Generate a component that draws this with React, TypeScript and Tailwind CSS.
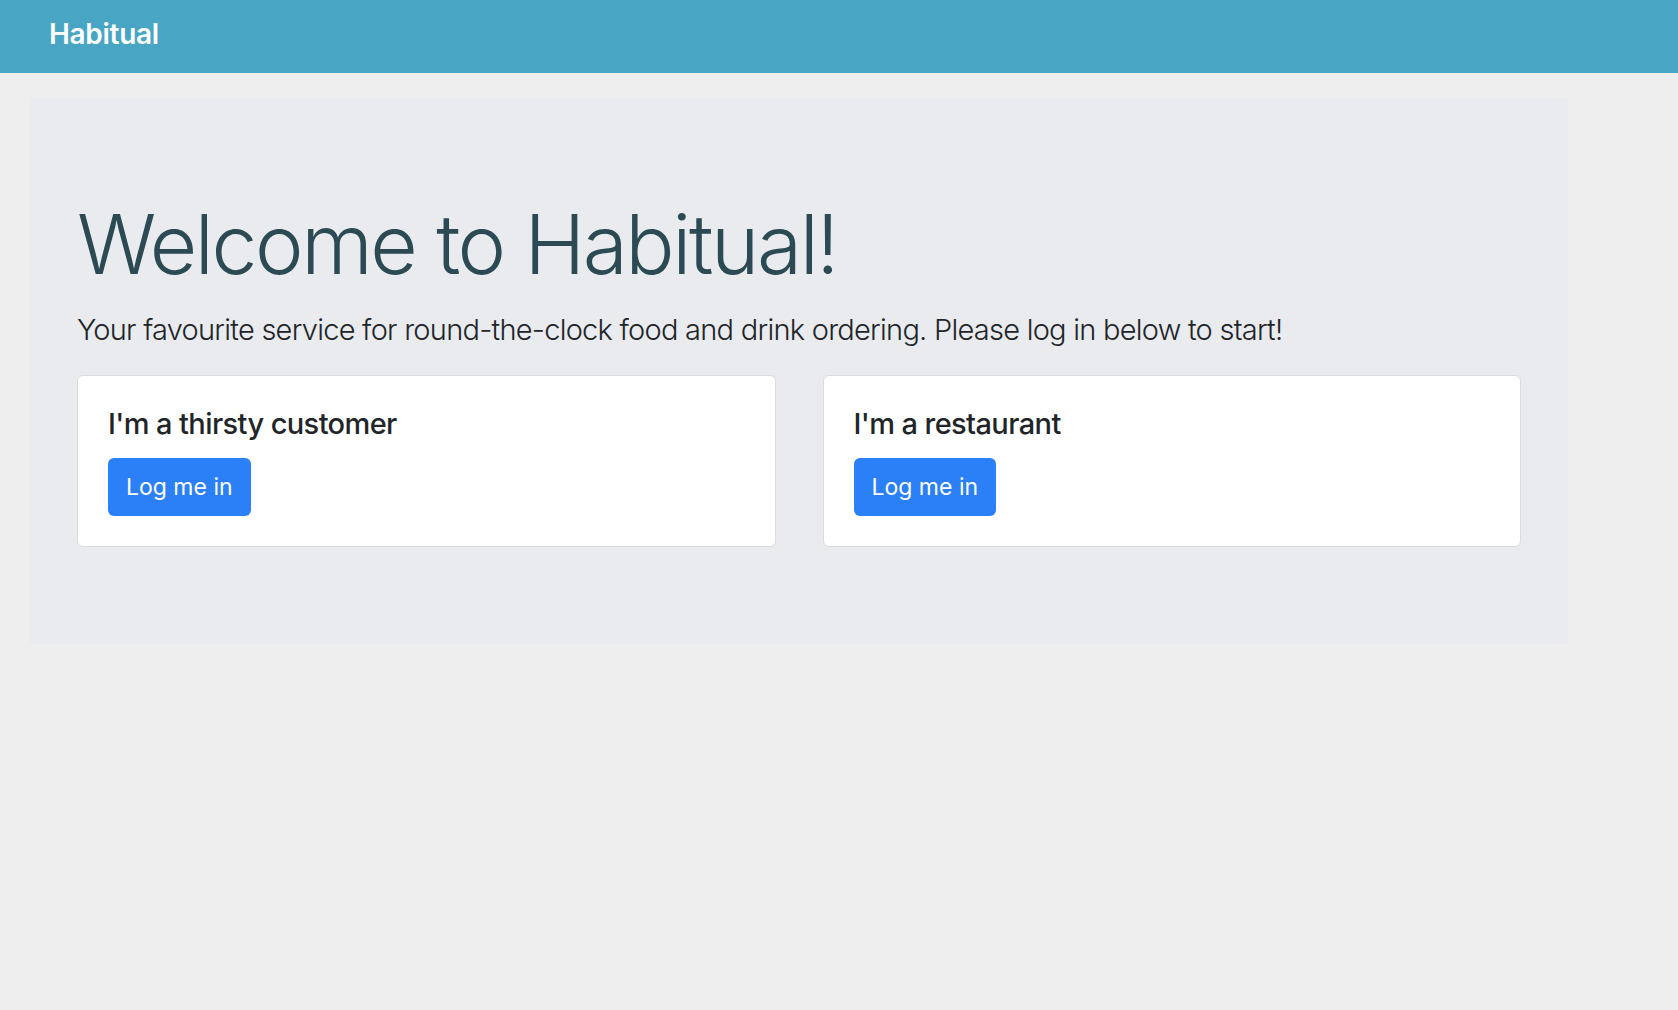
import React from 'react';

const roles = [
  { title: "I'm a thirsty customer" },
  { title: "I'm a restaurant" },
];

const RoleCard: React.FC<{ title: string }> = ({ title }) => (
  <div className="flex-1 bg-white border-[1.5px] border-[#dcdcdc] rounded-[6px] p-[30px]">
    <h5 className="text-[29px] leading-[36px] font-medium text-[#212529] tracking-[-0.6px] mb-[16px]">{title}</h5>
    <button className="h-[58px] px-[18px] rounded-[6px] bg-[#2b7ff7] text-white text-[23px] leading-[36px]">
      Log me in
    </button>
  </div>
);

export default function App() {
  return (
    <div className="min-h-screen bg-[#eeeeee] font-['Inter',sans-serif]">
      <header className="h-[73px] bg-[#48a5c3] flex items-center pl-[49px] pb-[6px]">
        <span className="text-white text-[28px] font-semibold tracking-[-0.3px]">Habitual</span>
      </header>

      <main className="ml-[30px] mt-[25px] w-[1538px] bg-[#e9ebee] rounded-[3px] px-[47px] pt-[96px] pb-[97px]">
        <h1 className="text-[82px] leading-[101px] font-light text-[#2c4a53] tracking-[-2.4px] mb-[12px]">
          Welcome to Habitual!
        </h1>
        <p className="text-[29px] leading-[45px] font-light text-[#212529] tracking-[-0.75px] mb-[23px]">
          Your favourite service for round-the-clock food and drink ordering. Please log in below to start!
        </p>
        <div className="flex gap-[47px]">
          {roles.map((r) => (
            <RoleCard key={r.title} title={r.title} />
          ))}
        </div>
      </main>
    </div>
  );
}
